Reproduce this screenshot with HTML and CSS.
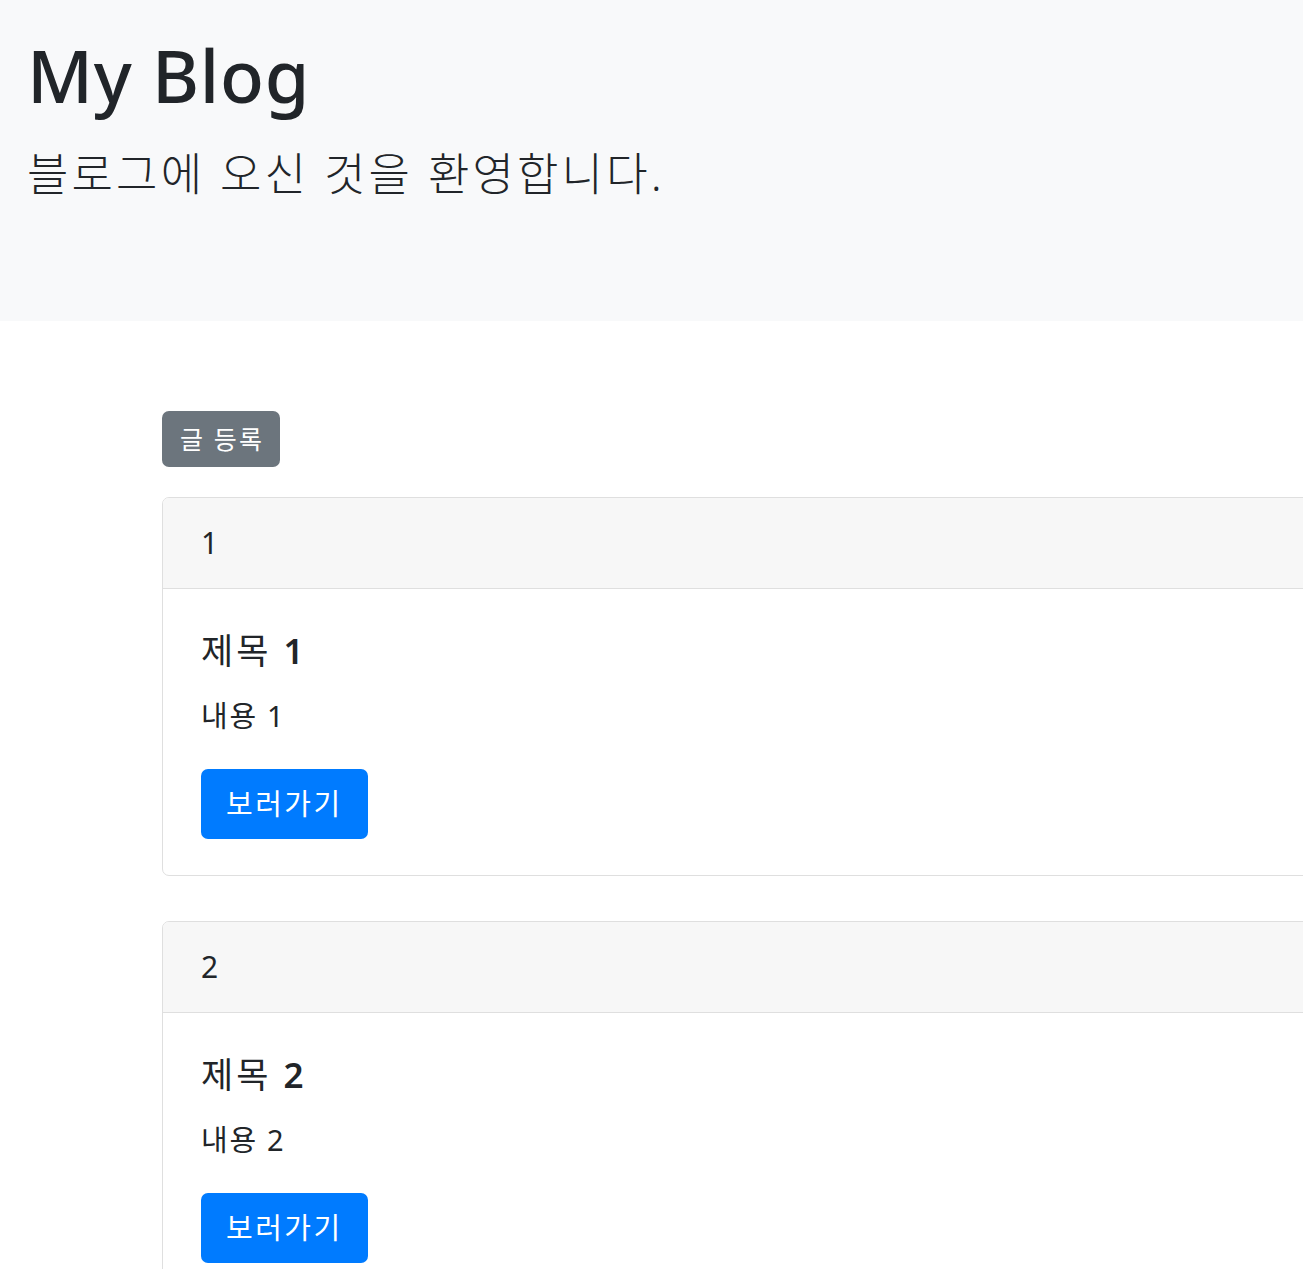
FILE: index.html
```html
<!DOCTYPE html>
<html lang="ko">
<head>
<meta charset="utf-8">
<title>My Blog</title>
<link rel="stylesheet" href="styles.css">
</head>
<body>
<header class="jumbotron">
  <h1 class="site-title">My Blog</h1>
  <p class="lead">블로그에 오신 것을 환영합니다.</p>
</header>
<main class="container">
  <button class="btn btn-secondary">글 등록</button>
  <div class="card">
    <div class="card-header">1</div>
    <div class="card-body">
      <h5 class="card-title">제목 <span class="num">1</span></h5>
      <p class="card-text">내용 1</p>
      <a class="btn btn-primary" href="#">보러가기</a>
    </div>
  </div>
  <div class="card">
    <div class="card-header">2</div>
    <div class="card-body">
      <h5 class="card-title">제목 <span class="num">2</span></h5>
      <p class="card-text">내용 2</p>
      <a class="btn btn-primary" href="#">보러가기</a>
    </div>
  </div>
</main>
</body>
</html>
```
FILE: styles.css
```css
html, body {
  overflow-x: hidden;
}
body {
  margin: 0;
  font-family: "Noto Sans", "Noto Sans CJK KR", sans-serif;
  color: #212529;
  background: #fff;
}
.jumbotron {
  background: #f8f9fa;
  padding: 32px 27px 114px;
}
.site-title {
  margin: 0;
  font-size: 72px;
  font-weight: 500;
  line-height: 86px;
  letter-spacing: 0.01em;
}
.lead {
  margin: 23px 0 0;
  font-size: 45px;
  font-weight: 300;
  line-height: 66px;
  letter-spacing: 0.07em;
}
.container {
  margin: 90px 0 0 162px;
  width: 1300px;
}
.btn {
  display: inline-block;
  font-family: "Noto Sans", "Noto Sans CJK KR", sans-serif;
  color: #fff;
  border: 0;
  text-decoration: none;
  border-radius: 7px;
  letter-spacing: 0.085em;
}
.btn-secondary {
  background: #6c757d;
  font-size: 25px;
  line-height: 56px;
  padding: 0 16px 0 18px;
  margin-bottom: 30px;
}
.btn-primary {
  background: #007bff;
  font-size: 29px;
  line-height: 70px;
  padding: 0 25px 0 25px;
}
.card {
  border: 1px solid #dfdfdf;
  border-radius: 7px;
  margin-bottom: 45px;
  overflow: hidden;
}
.card-header {
  background: #f7f7f7;
  border-bottom: 1px solid #dfdfdf;
  padding: 22px 38px;
  font-size: 30px;
  line-height: 46px;
}
.card-body {
  padding: 36px 38px;
}
.card-title {
  margin: 0 0 17px;
  font-size: 35px;
  font-weight: 400;
  line-height: 52px;
  letter-spacing: 0.085em;
}
.card-title .num {
  font-weight: 600;
}
.card-text {
  margin: 0 0 31px;
  font-size: 29px;
  line-height: 44px;
  letter-spacing: 0.06em;
}
```
